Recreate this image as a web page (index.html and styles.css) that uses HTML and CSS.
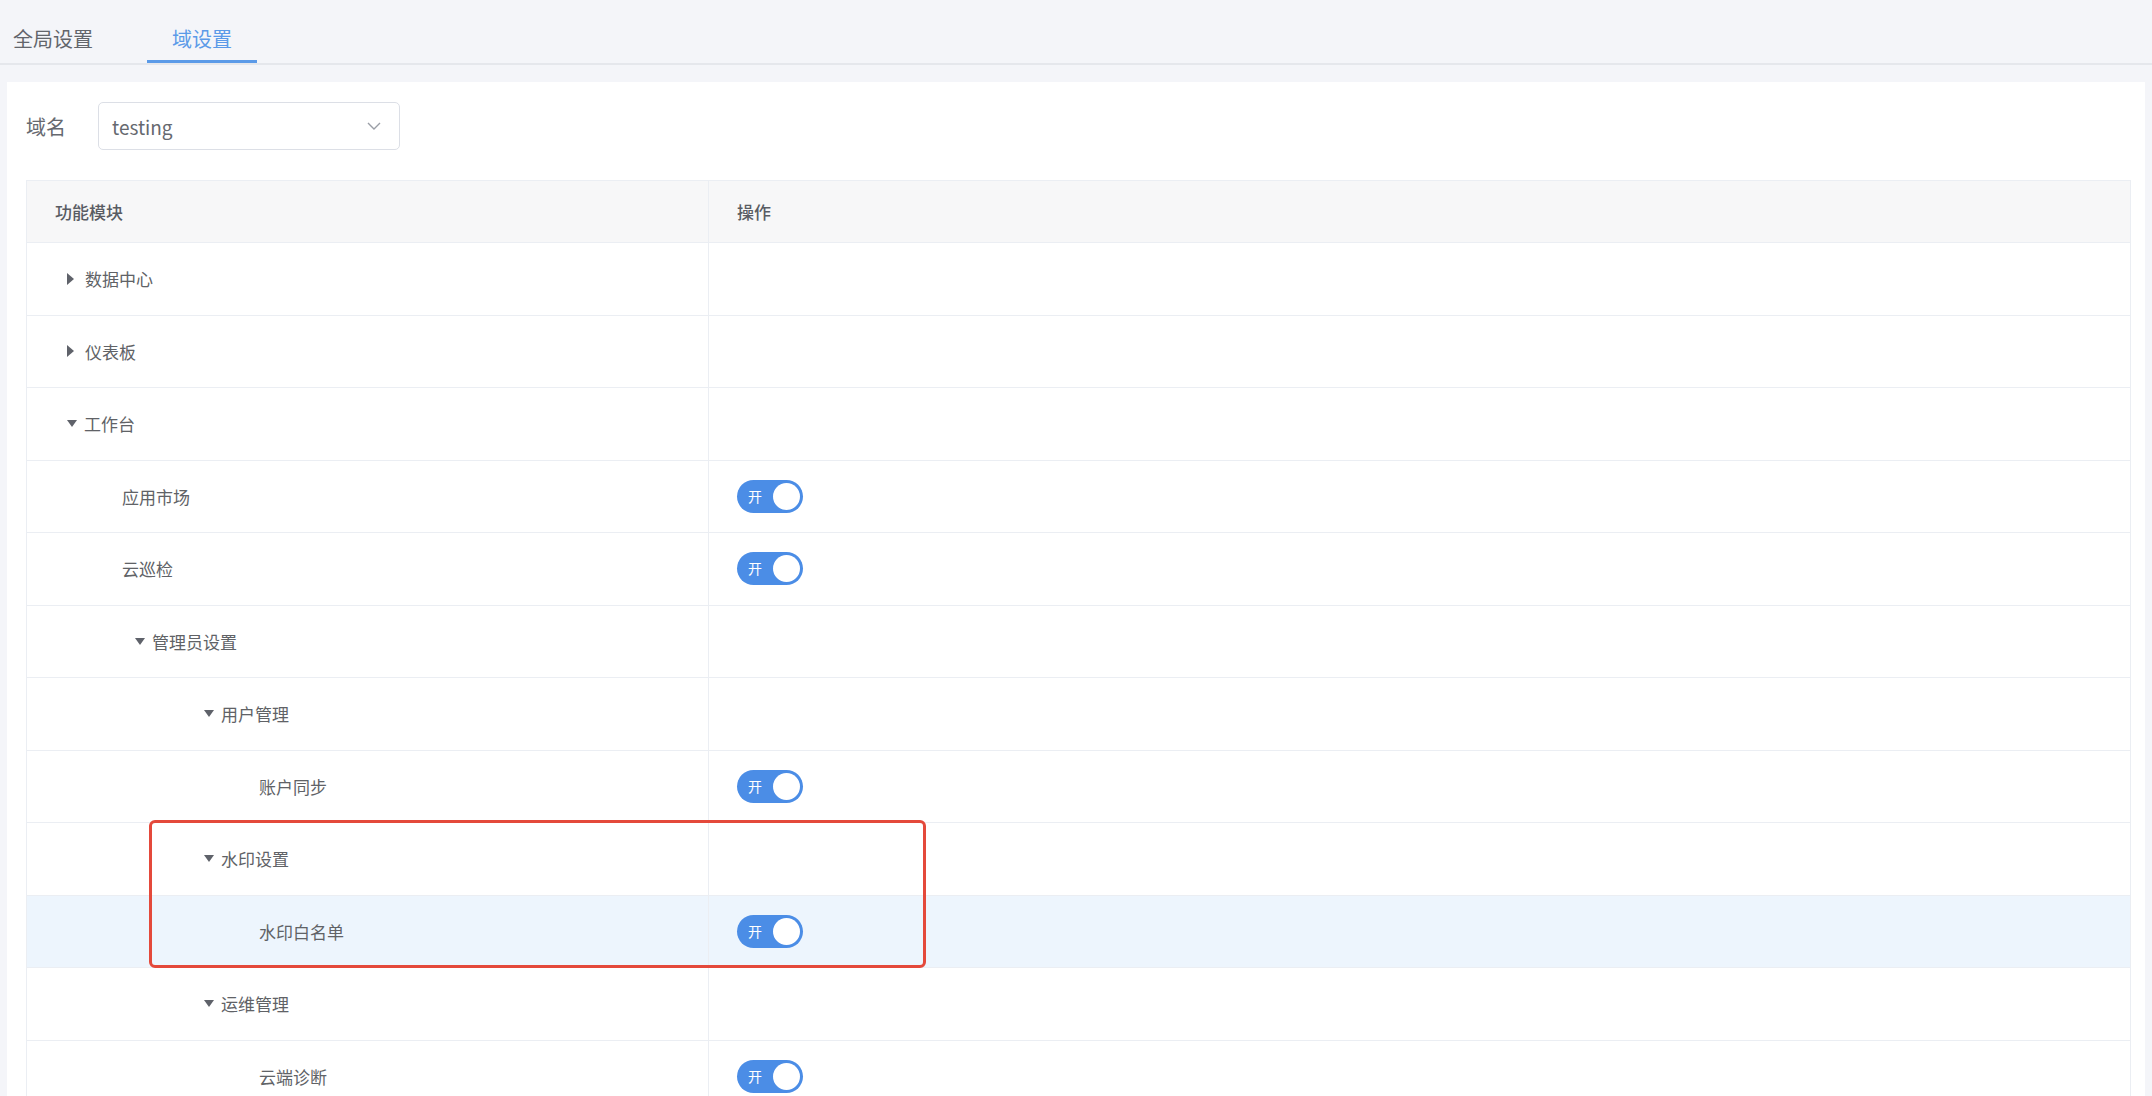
FILE: index.html
```html
<!DOCTYPE html>
<html lang="zh-CN">
<head>
    <meta charset="UTF-8">
    <title>域设置</title>
    <link rel="stylesheet" href="styles.css">
</head>
<body>

    <!-- Tabs -->
    <div class="tabs">
        <div class="tab">全局设置</div>
        <div class="tab active">域设置</div>
    </div>

    <div class="panel">
        <!-- Domain select -->
        <div class="domain-row">
            <span class="domain-label">域名</span>
            <div class="select">
                <span>testing</span>
                <svg class="chevron" width="14" height="8" viewBox="0 0 14 8">
                    <polyline points="1,1 7,7 13,1" fill="none" stroke="#9a9ea6" stroke-width="1.4"/>
                </svg>
            </div>
        </div>

        <!-- Module table -->
        <div class="table">
            <div class="row head">
                <div class="cell name">功能模块</div>
                <div class="cell op">操作</div>
            </div>

            <div class="row">
                <div class="cell name node lv0"><i class="arrow right"></i>数据中心</div>
                <div class="cell op"></div>
            </div>
            <div class="row">
                <div class="cell name node lv0"><i class="arrow right"></i>仪表板</div>
                <div class="cell op"></div>
            </div>
            <div class="row">
                <div class="cell name node lv0"><i class="arrow down"></i>工作台</div>
                <div class="cell op"></div>
            </div>
            <div class="row">
                <div class="cell name leaf lv1">应用市场</div>
                <div class="cell op"><span class="switch"><b>开</b></span></div>
            </div>
            <div class="row">
                <div class="cell name leaf lv1">云巡检</div>
                <div class="cell op"><span class="switch"><b>开</b></span></div>
            </div>
            <div class="row">
                <div class="cell name node lv1"><i class="arrow down"></i>管理员设置</div>
                <div class="cell op"></div>
            </div>
            <div class="row">
                <div class="cell name node lv2"><i class="arrow down"></i>用户管理</div>
                <div class="cell op"></div>
            </div>
            <div class="row">
                <div class="cell name leaf lv3">账户同步</div>
                <div class="cell op"><span class="switch"><b>开</b></span></div>
            </div>
            <div class="row">
                <div class="cell name node lv2"><i class="arrow down"></i>水印设置</div>
                <div class="cell op"></div>
            </div>
            <div class="row hover">
                <div class="cell name leaf lv3">水印白名单</div>
                <div class="cell op"><span class="switch"><b>开</b></span></div>
            </div>
            <div class="row">
                <div class="cell name node lv2"><i class="arrow down"></i>运维管理</div>
                <div class="cell op"></div>
            </div>
            <div class="row">
                <div class="cell name leaf lv3">云端诊断</div>
                <div class="cell op"><span class="switch"><b>开</b></span></div>
            </div>

            <!-- annotation box -->
            <div class="mark"></div>
        </div>
    </div>

</body>
</html>
```

FILE: styles.css
```css
body {
    margin: 0;
    padding: 0;
    background-color: #f4f5f9;
    font-family: "Noto Sans CJK SC", "Noto Sans", sans-serif;
    color: #606266;
    overflow: hidden;
    height: 1096px;
}

/* Tabs */
.tabs {
    display: flex;
    gap: 29px;
    height: 63px;
    border-bottom: 2px solid #e5e7ec;
}

.tab {
    box-sizing: border-box;
    height: 63px;
    padding: 25px 25px 0;
    font-size: 20px;
    line-height: 28px;
    color: #62656b;
}

.tab:first-child {
    padding-left: 13px;
}

.tab.active {
    color: #5b9ae8;
    border-bottom: 3px solid #5b9ae8;
}

/* Panel */
.panel {
    margin: 17px 7px 0;
    padding: 20px 14px 0 19px;
    background-color: #fff;
    height: 1020px;
}

.domain-row {
    display: flex;
    align-items: center;
    gap: 32px;
}

.domain-label {
    font-size: 20px;
    color: #66696f;
}

.select {
    box-sizing: border-box;
    width: 302px;
    height: 48px;
    border: 1px solid #dcdfe6;
    border-radius: 5px;
    display: flex;
    align-items: center;
    justify-content: space-between;
    padding: 0 18px 0 13px;
    font-size: 19px;
    color: #66696f;
}

/* Table */
.table {
    position: relative;
    margin-top: 30px;
    border: 1px solid #ebeef3;
    border-bottom: none;
}

.row {
    display: grid;
    grid-template-columns: 682px 1fr;
    box-sizing: border-box;
    height: 72.5px;
    border-bottom: 1px solid #ebeef3;
}

.row.head {
    height: 62px;
    background-color: #f7f7f8;
}

.row.head .cell {
    font-size: 17px;
    font-weight: 500;
    color: #595c63;
}

.row.hover {
    background-color: #edf5fd;
}

.cell {
    display: flex;
    align-items: center;
    font-size: 17px;
    padding-left: 28px;
}

.cell.name {
    border-right: 1px solid #ebeef3;
}

.cell.op {
    padding-left: 28px;
}

/* tree indents */
.node.lv0 { padding-left: 40px; }
.node.lv1 { padding-left: 108px; }
.node.lv2 { padding-left: 177px; }
.leaf.lv1 { padding-left: 95px; }
.leaf.lv3 { padding-left: 232px; }

.arrow {
    display: inline-block;
    width: 0;
    height: 0;
    margin-right: 8px;
}

.arrow.right {
    border-left: 7px solid #5f626a;
    border-top: 6px solid transparent;
    border-bottom: 6px solid transparent;
    margin-right: 11px;
}

.arrow.down {
    border-top: 7px solid #5f626a;
    border-left: 5.5px solid transparent;
    border-right: 5.5px solid transparent;
    margin-right: 7px;
}

/* Switch */
.switch {
    position: relative;
    display: inline-block;
    width: 66px;
    height: 33px;
    border-radius: 17px;
    background-color: #4b8de6;
}

.switch b {
    position: absolute;
    left: 11px;
    top: 0;
    line-height: 33px;
    font-size: 14px;
    font-weight: normal;
    color: #fff;
}

.switch::after {
    content: "";
    position: absolute;
    right: 3px;
    top: 3px;
    width: 27px;
    height: 27px;
    border-radius: 50%;
    background-color: #fff;
}

/* Red annotation box */
.mark {
    position: absolute;
    left: 122px;
    top: 639px;
    width: 777px;
    height: 148px;
    box-sizing: border-box;
    border: 3px solid #e4493b;
    border-radius: 6px;
}
```
